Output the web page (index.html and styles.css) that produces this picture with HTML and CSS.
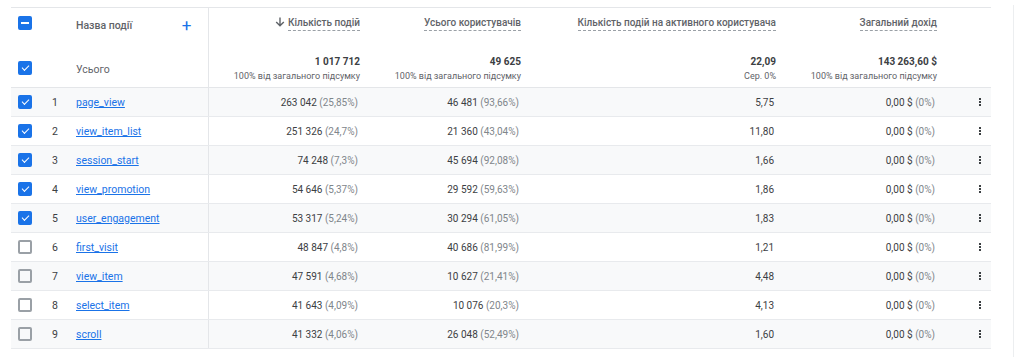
FILE: index.html
```html
<!DOCTYPE html>
<html lang="uk">
<head>
<meta charset="utf-8">
<link rel="stylesheet" href="styles.css">
</head>
<body>
<div class="page">
  <div class="report">
    <table class="grid">
      <colgroup>
        <col class="c-check"><col class="c-num"><col class="c-name">
        <col class="c-a"><col class="c-b"><col class="c-c"><col class="c-d"><col class="c-menu">
      </colgroup>
      <thead>
        <tr class="head">
          <th class="cell-check"><span class="cb cb-ind"></span></th>
          <th colspan="2" class="name-head">
            <div class="name-head-in"><span>Назва події</span><span class="plus">+</span></div>
          </th>
          <th class="num first"><svg class="sort" width="10" height="10" viewBox="0 0 10 10"><path d="M5 0.5V8.5M1.2 5 5 8.8 8.8 5" fill="none" stroke="#5f6368" stroke-width="1.4"/></svg><span class="lbl">Кількість подій</span></th>
          <th class="num"><span class="lbl">Усього користувачів</span></th>
          <th class="num"><span class="lbl">Кількість подій на активного користувача</span></th>
          <th class="num"><span class="lbl">Загальний дохід</span></th>
          <th></th>
        </tr>
        <tr class="totals">
          <td class="cell-check"><span class="cb cb-on"></span></td>
          <td colspan="2" class="total-label">Усього</td>
          <td class="num first"><div class="tv">1 017 712</div><div class="ts">100% від загального підсумку</div></td>
          <td class="num"><div class="tv">49 625</div><div class="ts">100% від загального підсумку</div></td>
          <td class="num"><div class="tv">22,09</div><div class="ts">Сер. 0%</div></td>
          <td class="num"><div class="tv">143 263,60 $</div><div class="ts">100% від загального підсумку</div></td>
          <td></td>
        </tr>
      </thead>
      <tbody>
        <tr class="odd"><td class="cell-check"><span class="cb cb-on"></span></td><td class="idx">1</td><td class="ev"><a href="#">page_view</a></td><td class="num first">263 042 <span class="pc">(25,85%)</span></td><td class="num">46 481 <span class="pc">(93,66%)</span></td><td class="num">5,75</td><td class="num">0,00 $ <span class="pc">(0%)</span></td><td class="menu"><span class="kebab"></span></td></tr>
        <tr><td class="cell-check"><span class="cb cb-on"></span></td><td class="idx">2</td><td class="ev"><a href="#">view_item_list</a></td><td class="num first">251 326 <span class="pc">(24,7%)</span></td><td class="num">21 360 <span class="pc">(43,04%)</span></td><td class="num">11,80</td><td class="num">0,00 $ <span class="pc">(0%)</span></td><td class="menu"><span class="kebab"></span></td></tr>
        <tr class="odd"><td class="cell-check"><span class="cb cb-on"></span></td><td class="idx">3</td><td class="ev"><a href="#">session_start</a></td><td class="num first">74 248 <span class="pc">(7,3%)</span></td><td class="num">45 694 <span class="pc">(92,08%)</span></td><td class="num">1,66</td><td class="num">0,00 $ <span class="pc">(0%)</span></td><td class="menu"><span class="kebab"></span></td></tr>
        <tr><td class="cell-check"><span class="cb cb-on"></span></td><td class="idx">4</td><td class="ev"><a href="#">view_promotion</a></td><td class="num first">54 646 <span class="pc">(5,37%)</span></td><td class="num">29 592 <span class="pc">(59,63%)</span></td><td class="num">1,86</td><td class="num">0,00 $ <span class="pc">(0%)</span></td><td class="menu"><span class="kebab"></span></td></tr>
        <tr class="odd"><td class="cell-check"><span class="cb cb-on"></span></td><td class="idx">5</td><td class="ev"><a href="#">user_engagement</a></td><td class="num first">53 317 <span class="pc">(5,24%)</span></td><td class="num">30 294 <span class="pc">(61,05%)</span></td><td class="num">1,83</td><td class="num">0,00 $ <span class="pc">(0%)</span></td><td class="menu"><span class="kebab"></span></td></tr>
        <tr><td class="cell-check"><span class="cb"></span></td><td class="idx">6</td><td class="ev"><a href="#">first_visit</a></td><td class="num first">48 847 <span class="pc">(4,8%)</span></td><td class="num">40 686 <span class="pc">(81,99%)</span></td><td class="num">1,21</td><td class="num">0,00 $ <span class="pc">(0%)</span></td><td class="menu"><span class="kebab"></span></td></tr>
        <tr class="odd"><td class="cell-check"><span class="cb"></span></td><td class="idx">7</td><td class="ev"><a href="#">view_item</a></td><td class="num first">47 591 <span class="pc">(4,68%)</span></td><td class="num">10 627 <span class="pc">(21,41%)</span></td><td class="num">4,48</td><td class="num">0,00 $ <span class="pc">(0%)</span></td><td class="menu"><span class="kebab"></span></td></tr>
        <tr><td class="cell-check"><span class="cb"></span></td><td class="idx">8</td><td class="ev"><a href="#">select_item</a></td><td class="num first">41 643 <span class="pc">(4,09%)</span></td><td class="num">10 076 <span class="pc">(20,3%)</span></td><td class="num">4,13</td><td class="num">0,00 $ <span class="pc">(0%)</span></td><td class="menu"><span class="kebab"></span></td></tr>
        <tr class="odd"><td class="cell-check"><span class="cb"></span></td><td class="idx">9</td><td class="ev"><a href="#">scroll</a></td><td class="num first">41 332 <span class="pc">(4,06%)</span></td><td class="num">26 048 <span class="pc">(52,49%)</span></td><td class="num">1,60</td><td class="num">0,00 $ <span class="pc">(0%)</span></td><td class="menu"><span class="kebab"></span></td></tr>
      </tbody>
    </table>
  </div>
  <div class="side"></div>
</div>
</body>
</html>
```

FILE: styles.css
```css
* { box-sizing: border-box; }
html, body { margin: 0; padding: 0; background: #fff; }
body {
  font-family: Roboto, "Noto Sans", "Liberation Sans", sans-serif;
  font-size: 10px;
  color: #3c4043;
}
.page {
  display: flex;
  height: 357px;
  overflow: hidden;
}
.report {
  width: 991px;
  padding: 7px 0 0 11px;
}
.side {
  margin-left: 22px;
  width: 11px;
  margin-top: 5px;
  border-left: 1px solid #eceef0;
}
.grid {
  width: 980px;
  border-collapse: collapse;
  table-layout: fixed;
  border-top: 1px solid #e4e6e9;
}
.c-check { width: 34px; }
.c-num { width: 31px; }
.c-name { width: 132px; }
.c-a { width: 168px; }
.c-b { width: 161px; }
.c-c { width: 255px; }
.c-d { width: 161px; }
.c-menu { width: 38px; }

th, td { padding: 0; font-weight: normal; }

.head th {
  height: 42px;
  vertical-align: top;
  padding-top: 8px;
  color: #5f6368;
  font-weight: 500;
  text-align: left;
}
.head .cell-check { padding-top: 8px; }
.name-head { border-right: 1px solid #e4e6e9; }
.name-head-in {
  display: flex;
  justify-content: space-between;
  padding: 3px 16px 0 31px;
  font-size: 10.5px;
}
.plus {
  color: #1a73e8;
  font-size: 17px;
  font-weight: 400;
  line-height: 12px;
}
.head .num { text-align: right; padding-right: 16px; padding-top: 9px; }
.lbl {
  border-bottom: 1px dashed #9aa0a6;
  padding-bottom: 2px;
}
.sort {
  vertical-align: -1px;
  margin-right: 3px;
}

.totals td {
  height: 38px;
  vertical-align: middle;
  border-bottom: 1px solid #e4e6e9;
}
.totals .num { text-align: right; padding-right: 16px; padding-top: 1px; }
.total-label { color: #5f6368; border-right: 1px solid #e4e6e9; padding-top: 2px; padding-left: 31px; font-size: 10.5px; }
.tv { font-weight: 700; color: #3c4043; line-height: 14px; }
.ts { font-size: 9px; color: #5f6368; line-height: 14px; }

.cell-check { padding-left: 7px; }
tbody td {
  height: 29px;
  border-bottom: 1px solid #e8eaed;
  vertical-align: middle;
}
tbody tr.odd td { background: #f8f9fa; }
.idx { padding-left: 7px; color: #3c4043; font-size: 10.5px; }
.ev { border-right: 1px solid #e4e6e9; font-size: 10.5px; }
.ev a { color: #1a73e8; text-decoration: underline; }
tbody .num { text-align: right; padding-right: 18px; color: #3c4043; }
.pc { color: #80868b; }
.menu { padding-left: 26px; }

.cb {
  display: block;
  width: 14px;
  height: 14px;
  border-radius: 2px;
  border: 2px solid #9aa0a6;
  position: relative;
}
.cb-on, .cb-ind { background: #1a73e8; border-color: #1a73e8; }
.cb-on::after {
  content: "";
  position: absolute;
  left: 2px;
  top: 0px;
  width: 6px;
  height: 3px;
  border-left: 1.6px solid #fff;
  border-bottom: 1.6px solid #fff;
  transform: rotate(-45deg);
  transform-origin: center;
  margin-top: 2px;
}
.cb-ind::after {
  content: "";
  position: absolute;
  left: 1px;
  right: 1px;
  top: 4px;
  height: 2px;
  background: #fff;
}
.kebab {
  display: block;
  width: 2px;
  height: 2px;
  background: #3c4043;
  box-shadow: 0 -3px 0 #3c4043, 0 3px 0 #3c4043;
}
```
